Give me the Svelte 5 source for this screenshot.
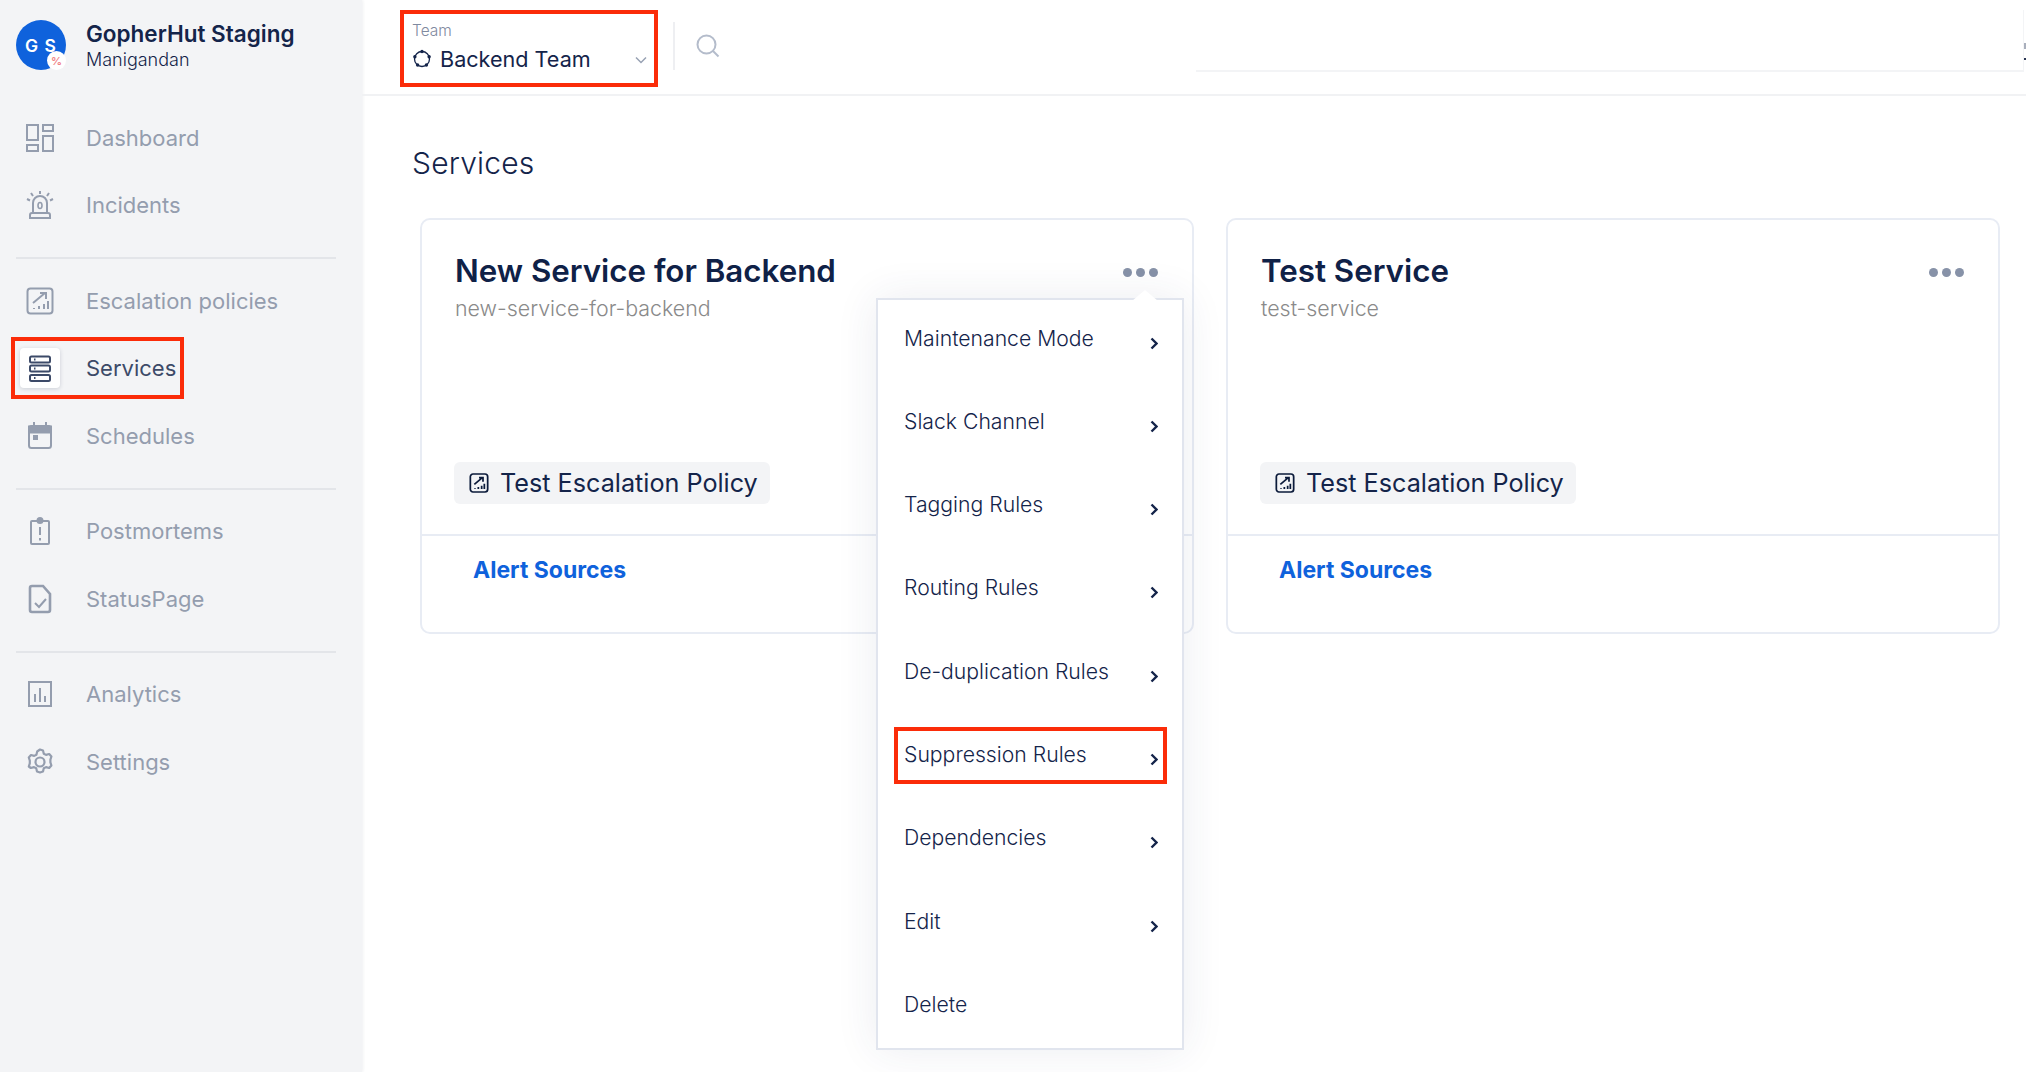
<script>
	const groups = [
		[
			{ key: 'dashboard', label: 'Dashboard' },
			{ key: 'incidents', label: 'Incidents' }
		],
		[
			{ key: 'escalation', label: 'Escalation policies' },
			{ key: 'services', label: 'Services', active: true },
			{ key: 'schedules', label: 'Schedules' }
		],
		[
			{ key: 'postmortems', label: 'Postmortems' },
			{ key: 'statuspage', label: 'StatusPage' }
		],
		[
			{ key: 'analytics', label: 'Analytics' },
			{ key: 'settings', label: 'Settings' }
		]
	];

	const menuItems = [
		{ label: 'Maintenance Mode', arrow: true },
		{ label: 'Slack Channel', arrow: true },
		{ label: 'Tagging Rules', arrow: true },
		{ label: 'Routing Rules', arrow: true },
		{ label: 'De-duplication Rules', arrow: true },
		{ label: 'Suppression Rules', arrow: true, marked: true },
		{ label: 'Dependencies', arrow: true },
		{ label: 'Edit', arrow: true },
		{ label: 'Delete', arrow: false }
	];

	const services = [
		{ name: 'New Service for Backend', slug: 'new-service-for-backend', open: true },
		{ name: 'Test Service', slug: 'test-service', open: false }
	];

	// team icon: ring with five nodes on it
	const nodes = [0, 1, 2, 3, 4].map((n) => {
		const a = ((n * 72 - 90) * Math.PI) / 180;
		return { x: 10 + 7.5 * Math.cos(a), y: 10 + 7.5 * Math.sin(a) };
	});
</script>

{#snippet navIcon(key)}
	<svg width="30" height="30" viewBox="0 0 30 30" fill="none" stroke="currentColor" stroke-width="2" aria-hidden="true">
		{#if key === 'dashboard'}
			<rect x="2" y="2" width="11" height="15" />
			<rect x="18" y="2" width="10" height="6" />
			<rect x="2" y="22" width="11" height="6" />
			<rect x="18" y="13" width="10" height="15" />
		{:else if key === 'incidents'}
			<path d="M8 23V13a7 7 0 0 1 14 0v10" />
			<path d="M5 28v-3a2 2 0 0 1 2-2h16a2 2 0 0 1 2 2v3z" />
			<ellipse cx="15" cy="15.5" rx="2" ry="3" stroke-width="1.6" />
			<path d="M15 1v3M6 3l2 3M24 3l-2 3M2 9l3 1.5M28 9l-3 1.5" />
		{:else if key === 'escalation'}
			<rect x="2.5" y="2.5" width="25" height="25" rx="3" />
			<path d="M8 17 20 7M15 7h6v6" />
			<path d="M9 23v-1M14 23v-3M19 23v-5M23 23v-8" />
		{:else if key === 'services'}
			<rect x="5" y="3.5" width="20" height="6" rx="1.5" />
			<rect x="5" y="12.5" width="20" height="6" rx="1.5" />
			<rect x="5" y="22" width="20" height="6" rx="1.5" />
			<path d="M9 6.5h1.5M9 15.5h1.5M9 25h1.5" />
		{:else if key === 'schedules'}
			<rect x="4" y="5" width="22" height="22" rx="2.5" />
			<path d="M4 5.5h22v6H4z" fill="currentColor" />
			<path d="M9 1v5M21 1v5" />
			<rect x="8" y="14" width="5" height="5" fill="currentColor" stroke="none" />
		{:else if key === 'postmortems'}
			<rect x="6" y="5" width="18" height="23" rx="1" />
			<circle cx="15" cy="4.5" r="2.5" fill="currentColor" />
			<path d="M15 11v8M15 22v2.5" />
		{:else if key === 'statuspage'}
			<path d="M5 4a2 2 0 0 1 2-2h11l7 8v16a2 2 0 0 1-2 2H7a2 2 0 0 1-2-2z" stroke-width="2.6" />
			<path d="M10 19l4 4 7-8" />
		{:else if key === 'analytics'}
			<rect x="4" y="3" width="22" height="24" />
			<path d="M10 23v-8M15 23V9M20 23v-6" />
		{:else if key === 'settings'}
			<path d="M15 2.5l3 1 .8 3.2 2.2 1.2 3.2-.9 2.2 2.5-1 3.1v2.8l1 3.1-2.2 2.5-3.2-.9-2.2 1.2-.8 3.2-3 1-3-1-.8-3.2-2.2-1.2-3.2.9L3.8 19.5l1-3.1v-2.8l-1-3.1L6 8l3.2.9 2.2-1.2.8-3.2z" stroke-linejoin="round" stroke-width="2.2" />
			<circle cx="15" cy="15" r="4.5" stroke-width="2.2" />
		{/if}
	</svg>
{/snippet}

{#snippet policyIcon()}
	<svg class="policy-icon" width="20" height="22" viewBox="0 0 30 32" fill="none" stroke="#0b1a3a" stroke-width="2.6" aria-hidden="true">
		<rect x="2" y="2.5" width="26" height="27" rx="4" />
		<path d="M8 18 20 8M15 8h6v6" />
		<path d="M9 25v-1M14 25v-3M19 25v-5M23 25v-8" />
	</svg>
{/snippet}

{#snippet dots()}
	<span class="dots" aria-label="More"><i></i><i></i><i></i></span>
{/snippet}

<div class="app">
	<aside class="sidebar">
		<div class="org">
			<div class="avatar">
				<span class="initials">G S</span>
				<span class="badge">%</span>
			</div>
			<div class="org-text">
				<div class="org-name">GopherHut Staging</div>
				<div class="org-user">Manigandan</div>
			</div>
		</div>

		{#each groups as group, i}
			{#if i > 0}
				<div class="divider"></div>
			{/if}
			{#each group as item}
				<div class="nav-item" class:active={item.active}>
					<span class="nav-icon">{@render navIcon(item.key)}</span>
					<span>{item.label}</span>
					{#if item.active}
						<span class="mark mark-nav"></span>
					{/if}
				</div>
			{/each}
		{/each}
	</aside>

	<div class="main">
		<header class="topbar">
			<div class="team">
				<span class="mark mark-team"></span>
				<div class="team-label">Team</div>
				<div class="team-value">
					<svg width="20" height="20" viewBox="0 0 20 20" fill="none" stroke="#14244a" stroke-width="1.3" aria-hidden="true">
						<circle cx="10" cy="10" r="7.5" />
						{#each nodes as node}
							<circle cx={node.x} cy={node.y} r="1.7" fill="#14244a" stroke="none" />
						{/each}
					</svg>
					<span>Backend Team</span>
					<svg class="team-caret" width="12" height="8" viewBox="0 0 12 8" fill="none" stroke="#98a1b3" stroke-width="1.5" aria-hidden="true">
						<path d="M1 1.5 6 6.5 11 1.5" />
					</svg>
				</div>
			</div>
			<div class="top-sep"></div>
			<svg class="search" width="24" height="24" viewBox="0 0 24 24" fill="none" stroke="#b4bccb" stroke-width="2" aria-hidden="true">
				<circle cx="10.5" cy="10.5" r="9" />
				<path d="M17 17l5.5 5.5" />
			</svg>
			<div class="top-filler"></div>
			<span class="clip clip-a"></span>
			<span class="clip clip-b"></span>
		</header>

		<section class="content">
			<h1>Services</h1>
			<div class="cards">
				{#each services as service}
					<article class="card">
						<div class="card-body">
							<div class="card-head">
								<div class="card-title">
									<h2>{service.name}</h2>
									<div class="slug">{service.slug}</div>
								</div>
								{@render dots()}
							</div>
							<div class="policy">
								{@render policyIcon()}
								<span>Test Escalation Policy</span>
							</div>
						</div>
						<div class="card-foot">Alert Sources</div>

						{#if service.open}
							<div class="menu">
								<span class="menu-arrow"></span>
								{#each menuItems as entry}
									<div class="menu-item">
										<span>{entry.label}</span>
										{#if entry.arrow}
											<svg class="chev" width="8" height="13" viewBox="0 0 8 13" fill="none" stroke="#14244a" stroke-width="2.4" aria-hidden="true">
												<path d="M1.5 1.5 6.5 6.5 1.5 11.5" />
											</svg>
										{/if}
										{#if entry.marked}
											<span class="mark mark-menu"></span>
										{/if}
									</div>
								{/each}
							</div>
						{/if}
					</article>
				{/each}
			</div>
		</section>
	</div>
</div>

<style>
	:global(body) {
		margin: 0;
		background: #fff;
		font-family: Inter, "Liberation Sans", sans-serif;
		color: #0f2147;
	}

	.app {
		display: flex;
		width: 2026px;
		height: 1072px;
		overflow: hidden;
	}

	.sidebar {
		position: relative;
		width: 362px;
		flex: none;
		box-sizing: border-box;
		background: #f3f4f6;
		box-shadow: 1px 0 3px rgba(30, 40, 70, 0.07);
		padding: 20px 26px 0 16px;
	}

	.org {
		display: flex;
		gap: 20px;
		height: 84px;
	}

	.avatar {
		position: relative;
		width: 50px;
		height: 50px;
		border-radius: 50%;
		background: #0f62dc;
		color: #fff;
		font-size: 17.5px;
		font-weight: 600;
		display: flex;
		align-items: center;
		justify-content: center;
	}

	.initials {
		letter-spacing: 1px;
		white-space: pre;
	}

	.badge {
		position: absolute;
		right: 0;
		bottom: 0;
		width: 19px;
		height: 19px;
		border-radius: 50%;
		background: #fff;
		color: #f07f85;
		font-size: 11px;
		display: flex;
		align-items: center;
		justify-content: center;
	}

	.org-name {
		font-size: 22.5px;
		font-weight: 600;
		line-height: 30px;
		color: #14244a;
		margin-top: -1px;
	}

	.org-user {
		font-size: 18px;
		font-weight: 300;
		line-height: 24px;
		color: #14244a;
		margin-top: -1px;
	}

	.nav-item {
		position: relative;
		height: 67.5px;
		display: flex;
		align-items: center;
		gap: 26px;
		padding-left: 4px;
		font-size: 22px;
		color: #949dae;
	}

	.nav-item.active {
		color: #3c4a68;
	}

	.nav-icon {
		width: 40px;
		height: 40px;
		border-radius: 4px;
		display: flex;
		align-items: center;
		justify-content: center;
		color: #949dae;
	}

	.active .nav-icon {
		background: #fff;
		color: #3c4a68;
		box-shadow: 0 1px 4px rgba(30, 40, 70, 0.18);
	}

	.divider {
		height: 2px;
		background: #e3e5e9;
		margin: 18px 0 8px;
	}

	.mark {
		position: absolute;
		box-sizing: border-box;
		border: 4px solid #fb2c09;
		pointer-events: none;
	}

	.mark-nav {
		left: -5px;
		top: 2.5px;
		width: 173px;
		height: 62px;
	}

	.mark-team {
		left: 0;
		top: 0;
		width: 258px;
		height: 77px;
	}

	.mark-menu {
		left: 16px;
		top: -13.5px;
		width: 273px;
		height: 57px;
	}

	.main {
		flex: 1;
		min-width: 0;
	}

	.topbar {
		position: relative;
		height: 96px;
		box-sizing: border-box;
		border-bottom: 2px solid #f1f2f4;
		display: flex;
		padding: 10px 0 0 38px;
	}

	.team {
		position: relative;
		width: 258px;
		height: 77px;
		box-sizing: border-box;
		padding: 11px 0 0 12px;
	}

	.team-label {
		font-size: 15.5px;
		font-weight: 300;
		line-height: 20px;
		color: #7f8aa0;
	}

	.team-value {
		display: flex;
		align-items: center;
		gap: 8px;
		margin-top: 2px;
		font-size: 21.6px;
		line-height: 32px;
		color: #14244a;
	}

	.team-caret {
		position: absolute;
		right: 11px;
		top: 46px;
	}

	.top-sep {
		width: 2px;
		height: 48px;
		background: #eeeff2;
		margin: 12px 0 0 15px;
	}

	.search {
		margin: 24px 0 0 21px;
	}

	.top-filler {
		flex: 1;
		height: 60px;
		margin-left: 476px;
		margin-right: 2px;
		border-bottom: 2px solid #f3f4f6;
		border-right: 1px solid #f3f4f6;
	}

	.clip {
		position: absolute;
		right: 0;
		width: 2px;
	}

	.clip-a {
		top: 43px;
		height: 6px;
		background: #a9afbc;
	}

	.clip-b {
		top: 58px;
		height: 2px;
		background: #2a3552;
	}

	.content {
		padding: 0 26px 0 50px;
	}

	h1 {
		margin: 0;
		padding-top: 47px;
		height: 75px;
		font-size: 30px;
		font-weight: 300;
		line-height: 40px;
		color: #14244a;
		letter-spacing: 0.2px;
	}

	.cards {
		display: flex;
		gap: 32px;
		margin-left: 8px;
	}

	.card {
		position: relative;
		width: 774px;
		height: 416px;
		box-sizing: border-box;
		border: 2px solid #e8ecf4;
		border-radius: 10px;
		background: #fff;
	}

	.card-body {
		height: 316px;
		box-sizing: border-box;
		padding: 32px 32px 30px 32px;
		border-bottom: 2px solid #e8ecf4;
		display: flex;
		flex-direction: column;
		justify-content: space-between;
	}

	.card-head {
		display: flex;
		justify-content: space-between;
		align-items: flex-start;
	}

	.card-title {
		margin-left: 1px;
	}

	h2 {
		margin: 0;
		font-size: 31.3px;
		font-weight: 600;
		line-height: 38px;
		color: #0f2147;
	}

	.slug {
		font-size: 21.4px;
		font-weight: 300;
		line-height: 30px;
		color: #8a8a8a;
		margin-top: 3px;
	}

	.dots {
		display: flex;
		gap: 4px;
		margin-top: 16px;
		margin-right: 2px;
	}

	.dots i {
		width: 9px;
		height: 9px;
		border-radius: 50%;
		background: #8792a8;
	}

	.policy {
		align-self: flex-start;
		height: 42px;
		box-sizing: border-box;
		display: flex;
		align-items: center;
		gap: 11px;
		padding: 0 12px 0 15px;
		background: #f3f4f6;
		border-radius: 6px;
		font-size: 25.2px;
		color: #14244a;
	}

	.card-foot {
		padding: 19px 0 0 51px;
		font-size: 23px;
		line-height: 30px;
		font-weight: 700;
		color: #0f62dc;
	}

	.menu {
		position: absolute;
		left: 454px;
		top: 78px;
		width: 308px;
		box-sizing: border-box;
		display: flex;
		flex-direction: column;
		gap: 57.3px;
		padding: 24.5px 0 31px;
		background: #fff;
		border: 2px solid #e1e5ee;
		box-shadow: 0 0 40px rgba(40, 55, 100, 0.09);
		z-index: 2;
	}

	.menu-arrow {
		position: absolute;
		right: 24px;
		top: -10px;
		width: 0;
		height: 0;
		border-left: 13px solid transparent;
		border-right: 13px solid transparent;
		border-bottom: 11px solid #fff;
	}

	.menu-item {
		position: relative;
		height: 26px;
		display: flex;
		justify-content: space-between;
		align-items: center;
		padding: 0 24px 0 26px;
		font-size: 21.2px;
		font-weight: 300;
		line-height: 26px;
		color: #14244a;
	}

	.chev {
		position: relative;
		top: 5.5px;
	}
</style>
